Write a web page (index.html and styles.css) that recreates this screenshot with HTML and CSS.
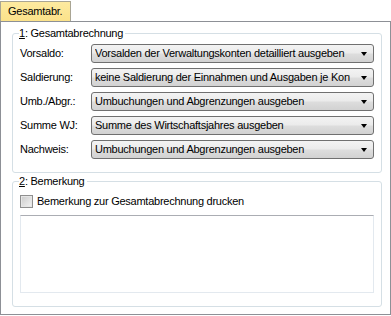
FILE: index.html
```html
<!DOCTYPE html>
<html lang="de">
<head>
    <meta charset="UTF-8">
    <title>Gesamtabrechnung</title>
    <link rel="stylesheet" href="styles.css">
</head>
<body>

    <!-- Tab strip -->
    <div class="tabs">
        <div class="tab">Gesamtabr.</div>
    </div>

    <div class="panel">
        <!-- 1: Gesamtabrechnung -->
        <fieldset class="group">
            <legend><u>1</u>: Gesamtabrechnung</legend>
            <div class="rows">
                <div class="row">
                    <span class="label">Vorsaldo:</span>
                    <div class="combo"><span class="value">Vorsalden der Verwaltungskonten detailliert ausgeben</span><span class="arrow"></span></div>
                </div>
                <div class="row">
                    <span class="label">Saldierung:</span>
                    <div class="combo"><span class="value">keine Saldierung der Einnahmen und Ausgaben je Konto</span><span class="arrow"></span></div>
                </div>
                <div class="row">
                    <span class="label">Umb./Abgr.:</span>
                    <div class="combo"><span class="value">Umbuchungen und Abgrenzungen ausgeben</span><span class="arrow"></span></div>
                </div>
                <div class="row">
                    <span class="label">Summe WJ:</span>
                    <div class="combo"><span class="value">Summe des Wirtschaftsjahres ausgeben</span><span class="arrow"></span></div>
                </div>
                <div class="row">
                    <span class="label">Nachweis:</span>
                    <div class="combo"><span class="value">Umbuchungen und Abgrenzungen ausgeben</span><span class="arrow"></span></div>
                </div>
            </div>
        </fieldset>

        <!-- 2: Bemerkung -->
        <fieldset class="group group-note">
            <legend><u>2</u>: Bemerkung</legend>
            <label class="check"><span class="box"></span>Bemerkung zur Gesamtabrechnung drucken</label>
            <div class="memo"></div>
        </fieldset>
    </div>

</body>
</html>
```

FILE: styles.css
```css
* {
    box-sizing: border-box;
    margin: 0;
    padding: 0;
}

body {
    font-family: 'Liberation Sans', Arial, sans-serif;
    font-size: 11px;
    letter-spacing: -0.25px;
    line-height: 13px;
    color: #000;
    background: #fff;
    width: 391px;
    height: 316px;
}

/* Tabs */
.tabs {
    display: flex;
    padding-top: 1px;
}

.tab {
    height: 20px;
    width: 71px;
    padding: 3px 0 0 7px;
    background: linear-gradient(#fdeaa0, #fbe28a);
    border: 1px solid #a9a594;
    border-bottom: none;
    font-size: 11px;
}

.panel {
    height: 294px;
    border: 1px solid #8d9096;
    padding: 5px 8px 0 11px;
}

/* Group boxes */
.group {
    min-width: 0;
    border: 1px solid #d5dfe5;
    border-radius: 3px;
    padding: 4px 7px 13px 7px;
}

.group legend {
    padding: 0 2px 0 0;
    margin-left: -1px;
    line-height: 13px;
}

.group-note {
    margin-top: 2px;
    padding-top: 6px;
}

.rows {
    display: flex;
    flex-direction: column;
    gap: 5px;
}

.row {
    display: flex;
    align-items: center;
}

.row .label {
    width: 71px;
    flex-shrink: 0;
}

.combo {
    flex: 1;
    min-width: 0;
    height: 19px;
    display: flex;
    align-items: center;
    border: 1px solid #707070;
    border-radius: 3px;
    background: linear-gradient(#f3f3f3 0%, #ebebeb 48%, #dddddd 52%, #d2d2d2 100%);
    padding: 0 6px 0 3px;
    overflow: hidden;
}

.combo .value {
    flex: 1;
    min-width: 0;
    white-space: nowrap;
    overflow: hidden;
}

.combo .arrow {
    flex-shrink: 0;
    width: 0;
    height: 0;
    margin-left: 11px;
    border-left: 3.5px solid transparent;
    border-right: 3.5px solid transparent;
    border-top: 4px solid #000;
}

/* Checkbox */
.check {
    display: flex;
    align-items: center;
    gap: 4px;
    height: 15px;
}

.check .box {
    width: 13px;
    height: 13px;
    border: 1px solid #8f8f8f;
    background: linear-gradient(135deg, #cbcbcb, #f4f4f4);
    box-shadow: inset 0 0 0 1px #e6e6e6;
}

.memo {
    margin-top: 6px;
    height: 78px;
    border: 1px solid #e3e9ef;
    border-top-color: #abadb3;
    background: #fff;
}
```
